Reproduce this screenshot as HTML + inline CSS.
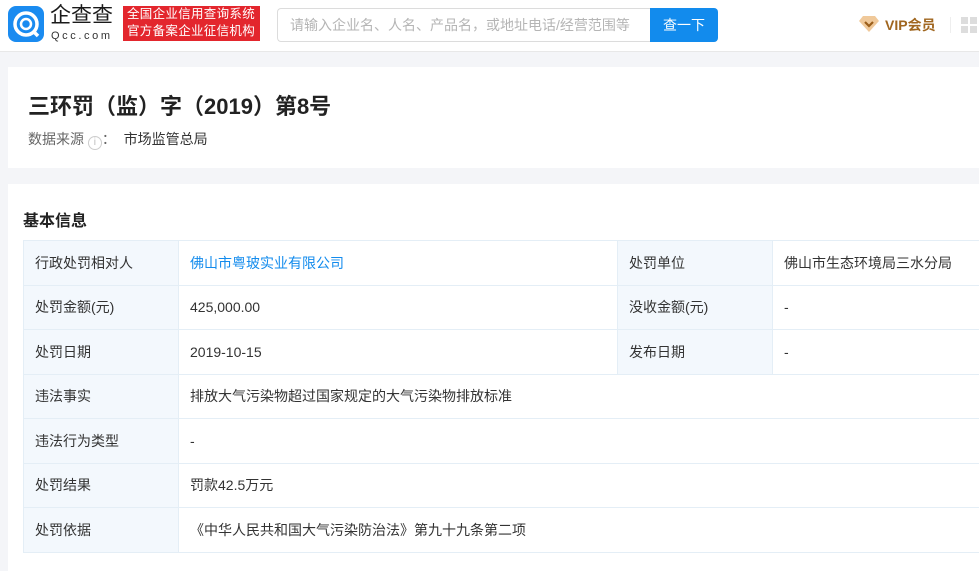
<!DOCTYPE html>
<html><head><meta charset="utf-8"><style>
*{margin:0;padding:0;box-sizing:border-box}
body{width:979px;height:571px;overflow:hidden;background:#f4f5f8;font-family:"Liberation Sans","Noto Sans CJK SC",sans-serif;color:#333;font-size:14px;position:relative}
.hdr{position:absolute;left:0;top:0;width:979px;height:52px;background:#fff;border-bottom:1px solid #e8e8e8}
.logo{position:absolute;left:8px;top:6px;width:36px;height:36px;border-radius:8px;background:#1a8bf0}
.abs{position:absolute;white-space:nowrap}
.red{position:absolute;left:123px;top:6px;width:137px;height:35px;background:#e3262d;color:#fff;font-size:12.5px;line-height:17px;padding-left:4px;letter-spacing:0.3px}
.search{position:absolute;left:277px;top:8px;width:374px;height:34px;border:1px solid #dcdcdc;border-right:none;border-radius:4px 0 0 4px;color:#b5b5b5;font-size:14px;line-height:32px;padding-left:12px}
.btn{position:absolute;left:650px;top:8px;width:68px;height:34px;background:#128bed;border-radius:0 4px 4px 0;color:#fff;font-size:14px;line-height:34px;text-align:center}
.card{position:absolute;left:8px;width:971px;background:#fff}
table{position:absolute;left:23px;top:240px;border-collapse:collapse;width:980px}
td{border:1px solid #e4eef6;height:44.5px;padding:0 11px;font-size:14px;color:#333}
td.l{background:#f3f8fd}
a{color:#128bed;text-decoration:none}
.sq{position:absolute;width:7px;height:7px;background:#ddd}
</style></head><body>
<div class="hdr">
 <div class="logo"><svg width="36" height="36" viewBox="0 0 36 36"><circle cx="18" cy="18" r="11" fill="none" stroke="#fff" stroke-width="3.5"/><circle cx="18" cy="18" r="5" fill="none" stroke="#fff" stroke-width="2.5"/><path d="M25 25l5 5" stroke="#fff" stroke-width="3.5"/></svg></div>
 <div class="abs" style="left:50px;top:4px;font-size:21px;line-height:24px;color:#1a1a1a;letter-spacing:0">企查查</div>
 <div class="abs" style="left:51px;top:30px;font-size:11px;line-height:12px;color:#333;letter-spacing:2.6px">Qcc.com</div>
 <div class="red">全国企业信用查询系统<br>官方备案企业征信机构</div>
 <div class="search">请输入企业名、人名、产品名，或地址电话/经营范围等</div>
 <div class="btn">查一下</div>
 <svg class="abs" style="left:859px;top:15px" width="20" height="18" viewBox="0 0 20 18"><path d="M4 1h12l4 5-10 11L0 6z" fill="#f0c99a"/><path d="M6 7l4 4 4-4" fill="none" stroke="#9b5e1a" stroke-width="2.2"/></svg>
 <div class="abs" style="left:885px;top:15px;font-size:14px;font-weight:bold;color:#a0661f">VIP会员</div>
 <div class="abs" style="left:950px;top:17px;width:1px;height:16px;background:#eee"></div>
 <div class="sq" style="left:961px;top:17px"></div><div class="sq" style="left:970px;top:17px"></div>
 <div class="sq" style="left:961px;top:26px"></div><div class="sq" style="left:970px;top:26px"></div>
</div>
<div class="card" style="top:67px;height:101px">
 <div class="abs" style="left:20px;top:22px;font-size:22px;font-weight:bold;color:#222">三环罚（监）字（2019）第8号</div>
 <div class="abs" style="left:20px;top:62px;font-size:14px;color:#666">数据来源 <span style="display:inline-block;width:14px;height:14px;border:1px solid #ccc;border-radius:50%;font-size:10px;line-height:12px;text-align:center;color:#bbb;vertical-align:-1px">i</span>：&nbsp;&nbsp;<span style="color:#333">市场监管总局</span></div>
</div>
<div class="card" style="top:184px;height:387px">
 <div class="abs" style="left:15px;top:23px;font-size:16px;font-weight:bold;color:#222">基本信息</div>
</div>
<table>
<colgroup><col style="width:155px"><col style="width:439px"><col style="width:155px"><col></colgroup>
<tr><td class="l">行政处罚相对人</td><td><a>佛山市粤玻实业有限公司</a></td><td class="l">处罚单位</td><td>佛山市生态环境局三水分局</td></tr>
<tr><td class="l">处罚金额(元)</td><td>425,000.00</td><td class="l">没收金额(元)</td><td>-</td></tr>
<tr><td class="l">处罚日期</td><td>2019-10-15</td><td class="l">发布日期</td><td>-</td></tr>
<tr><td class="l">违法事实</td><td colspan="3">排放大气污染物超过国家规定的大气污染物排放标准</td></tr>
<tr><td class="l">违法行为类型</td><td colspan="3">-</td></tr>
<tr><td class="l">处罚结果</td><td colspan="3">罚款42.5万元</td></tr>
<tr><td class="l">处罚依据</td><td colspan="3">《中华人民共和国大气污染防治法》第九十九条第二项</td></tr>
</table>
</body></html>
